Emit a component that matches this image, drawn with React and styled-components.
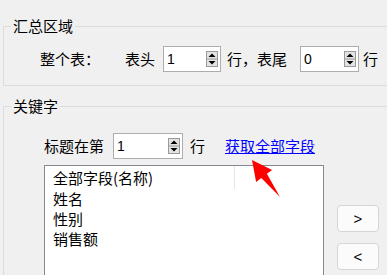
import React from 'react'
import styled, { createGlobalStyle } from 'styled-components'

const GlobalStyle = createGlobalStyle`
  html, body {
    margin: 0;
    padding: 0;
    width: 387px;
    height: 275px;
    overflow: hidden;
    background: #f0f0f0;
  }
  body {
    font-family: "Noto Sans CJK SC", "Microsoft YaHei", sans-serif;
    font-size: 15px;
    color: #000;
  }
`;

const Page = styled.div`
  position: relative;
  width: 387px;
  height: 275px;
  overflow: hidden;
`;

const Group = styled.fieldset`
  margin: ${p => p.$top}px -20px 0 3px;
  padding: 0 0 ${p => p.$bottom}px 0;
  border: 1px solid #dcdcdc;
  min-width: 0;
`;

const Legend = styled.legend`
  margin: 0 0 4px 7px;
  padding: 0 2px;
  line-height: 20px;
`;

const Content = styled.div`
  padding-left: ${p => p.$indent}px;
`;

const Row = styled.div`
  display: flex;
  align-items: center;
  height: 26px;
  margin-top: ${p => p.$top}px;
  white-space: nowrap;
`;

const Label = styled.span`
  margin-left: ${p => p.$gap || 0}px;
  line-height: 20px;
`;

const SpinBox = styled.div`
  display: flex;
  align-items: center;
  box-sizing: border-box;
  width: ${p => p.$width}px;
  height: 26px;
  margin-left: ${p => p.$gap}px;
  background: #fff;
  border: 1px solid #adadad;
  padding: 0 2px 0 3px;
`;

const SpinValue = styled.span`
  flex: 1;
  font-family: "Liberation Sans", Arial, sans-serif;
  font-size: 14px;
  line-height: 16px;
`;

const FetchLink = styled.a`
  margin-left: ${p => p.$gap}px;
  color: #0000ff;
  text-decoration: underline;
  line-height: 20px;
  cursor: pointer;
`;

const Spinner = () => (
  <svg width="12" height="16" viewBox="0 0 12 16">
    <rect x="0.5" y="0.5" width="11" height="15" fill="#e3e3e3" stroke="#9a9a9a" />
    <line x1="1" y1="8" x2="11" y2="8" stroke="#9a9a9a" />
    <polygon points="2.5,6 9.5,6 6,2.5" fill="#000" />
    <polygon points="2.5,10 9.5,10 6,13.5" fill="#000" />
  </svg>
);

const Body = styled.div`
  display: flex;
  align-items: flex-start;
  margin-top: 6px;
`;

const FieldList = styled.div`
  box-sizing: border-box;
  width: 280px;
  height: 160px;
  background: #fff;
  border: 1px solid #828790;
`;

const ListHeader = styled.div`
  display: grid;
  grid-template-columns: 190px 1fr;
  height: 23px;
`;

const HeaderCell = styled.div`
  padding: 2px 0 0 8px;
  line-height: 20px;
  border-right: ${p => (p.$divider ? '1px solid #e5e5e5' : 'none')};
`;

const ListItem = styled.div`
  padding-left: 8px;
  height: 20px;
  line-height: 20px;
`;

const ButtonColumn = styled.div`
  display: flex;
  flex-direction: column;
  gap: 11px;
  margin: 40px 0 0 13px;
`;

const MoveButton = styled.button`
  box-sizing: border-box;
  width: 42px;
  height: 27px;
  padding: 0;
  background: #fbfbfb;
  border: 1px solid #d6d6d6;
  border-radius: 4px;
  font-family: "Liberation Sans", Arial, sans-serif;
  font-size: 15px;
  color: #000;
`;

const Arrow = styled.svg`
  position: absolute;
  left: 245px;
  top: 155px;
  pointer-events: none;
`;

const fields = ['姓名', '性别', '销售额']

const App = () => {
  return (
    <Page>
      <GlobalStyle />
      <Group $top={16} $bottom={13}>
        <Legend>汇总区域</Legend>
        <Content $indent={36}>
          <Row $top={6}>
            <Label>整个表：</Label>
            <Label $gap={25}>表头</Label>
            <SpinBox $width={58} $gap={8}>
              <SpinValue>1</SpinValue>
              <Spinner />
            </SpinBox>
            <Label $gap={6}>行，表尾</Label>
            <SpinBox $width={59} $gap={13}>
              <SpinValue>0</SpinValue>
              <Spinner />
            </SpinBox>
            <Label $gap={4}>行</Label>
          </Row>
        </Content>
      </Group>

      <Group $top={10} $bottom={0}>
        <Legend>关键字</Legend>
        <Content $indent={40}>
          <Row $top={13}>
            <Label>标题在第</Label>
            <SpinBox $width={70} $gap={9}>
              <SpinValue>1</SpinValue>
              <Spinner />
            </SpinBox>
            <Label $gap={7}>行</Label>
            <FetchLink $gap={20}>获取全部字段</FetchLink>
          </Row>
          <Body>
            <FieldList>
              <ListHeader>
                <HeaderCell $divider>全部字段(名称)</HeaderCell>
                <HeaderCell />
              </ListHeader>
              {fields.map(f => (
                <ListItem key={f}>{f}</ListItem>
              ))}
            </FieldList>
            <ButtonColumn>
              <MoveButton>&gt;</MoveButton>
              <MoveButton>&lt;</MoveButton>
            </ButtonColumn>
          </Body>
        </Content>
      </Group>

      {/* red annotation arrow */}
      <Arrow width="45" height="48" viewBox="245 155 45 48">
        <polygon
          points="252,160 272.1,169.9 266.9,173.8 280,197 261.3,178 256.1,181.9"
          fill="#ff0000"
        />
      </Arrow>
    </Page>
  )
}

export default App
